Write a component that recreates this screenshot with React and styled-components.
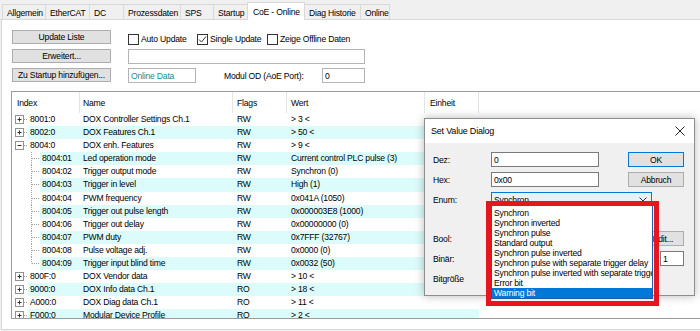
import styled, { createGlobalStyle } from "styled-components";

const GlobalStyle = createGlobalStyle`
  html, body {
    margin: 0;
    padding: 0;
    background: #f0f0f0;
  }
  body {
    font-family: "Liberation Sans", Arial, sans-serif;
    font-size: 8.6px;
    letter-spacing: -0.2px;
    color: #000;
  }
  * {
    box-sizing: border-box;
  }
`;

const Screen = styled.div`
  position: relative;
  width: 700px;
  height: 331px;
  overflow: hidden;
  background: #f0f0f0;
`;

const TabStrip = styled.div`
  display: flex;
  align-items: flex-end;
  height: 20px;
  padding-left: 2px;
  border-bottom: 1px solid #d9d9d9;
`;

const Tab = styled.div`
  width: ${(p) => p.$w}px;
  height: ${(p) => (p.$active ? 18 : 15)}px;
  margin-left: -1px;
  margin-bottom: ${(p) => (p.$active ? -1 : 0)}px;
  padding: ${(p) => (p.$active ? 4 : 3)}px 0 0 ${(p) => (p.$active ? 5 : 4)}px;
  border: 1px solid #d9d9d9;
  border-bottom: none;
  background: ${(p) => (p.$active ? "#fff" : "#f0f0f0")};
  white-space: nowrap;
  z-index: ${(p) => (p.$active ? 1 : 0)};
  &:first-child {
    margin-left: 0;
  }
`;

const Page = styled.div`
  height: 310px;
  margin-left: 1px;
  padding: 10px 0 0 9px;
  background: #fff;
  border-left: 1px solid #d9d9d9;
  border-bottom: 1px solid #d9d9d9;
`;

const Toolbar = styled.div`
  display: grid;
  grid-template-columns: 99px auto;
  grid-auto-rows: 15px;
  column-gap: 17px;
  row-gap: 4px;
  margin-left: 1px;
`;

const Button = styled.div`
  display: flex;
  align-items: center;
  justify-content: center;
  height: ${(p) => p.$h || 14}px;
  width: ${(p) => (p.$w ? p.$w + "px" : "auto")};
  justify-self: ${(p) => (p.$end ? "end" : "stretch")};
  background: #e1e1e1;
  border: 1px solid ${(p) => (p.$default ? "#0078d7" : "#adadad")};
  white-space: nowrap;
`;

const CheckRow = styled.div`
  display: grid;
  grid-template-columns: 69px 70px auto;
  align-items: center;
  padding-top: 3px;
`;

const Check = styled.label`
  display: flex;
  align-items: center;
  gap: 2px;
  white-space: nowrap;
`;

const Box = styled.span`
  display: inline-flex;
  align-items: center;
  justify-content: center;
  width: 11px;
  height: 11px;
  border: 1px solid #333;
  background: #fff;
`;

const Field = styled.div`
  display: flex;
  align-items: center;
  width: ${(p) => p.$w}px;
  height: 15px;
  padding-left: 2px;
  justify-self: ${(p) => (p.$end ? "end" : "start")};
  background: #fff;
  border: 1px solid ${(p) => (p.$light ? "#b4b4b4" : "#7a7a7a")};
  color: ${(p) => p.$color || "#000"};
  white-space: nowrap;
  overflow: hidden;
`;

const Inline = styled.div`
  display: flex;
  align-items: center;
`;

const FieldLabel = styled.span`
  width: 98px;
  margin-left: 28px;
  white-space: nowrap;
`;

const TableBox = styled.div`
  margin-top: 8px;
  width: 700px;
  height: 228px;
  border: 1px solid #9b9b9b;
  border-right: none;
  overflow: hidden;
`;

const HeaderRow = styled.div`
  display: flex;
  height: 21px;
`;

const HeadCell = styled.div`
  display: flex;
  align-items: center;
  width: ${(p) => p.$w}px;
  padding-left: ${(p) => p.$pad}px;
  border-right: 1px solid #e5e5e5;
`;

const Row = styled.div`
  display: flex;
  height: 13.1px;
  line-height: 13.1px;
`;

const Gutter = styled.svg`
  flex: none;
  display: block;
`;

const Stripe = styled.div`
  display: flex;
  background: ${(p) => (p.$odd ? "#dcfcfc" : "transparent")};
`;

const Cell = styled.div`
  width: ${(p) => p.$w}px;
  padding-left: ${(p) => p.$pad}px;
  white-space: nowrap;
  overflow: hidden;
`;

const Dialog = styled.div`
  position: absolute;
  left: 424px;
  top: 118px;
  width: 271px;
  height: 178px;
  background: #f0f0f0;
  border: 1px solid #8e8e8e;
  box-shadow: 0 0 9px rgba(0, 0, 0, 0.28);
`;

const TitleBar = styled.div`
  display: flex;
  align-items: center;
  justify-content: space-between;
  height: 24px;
  padding: 0 9px 0 6px;
  background: #fff;
  font-size: 9px;
`;

const DialogBody = styled.div`
  display: grid;
  grid-template-columns: 58px 137px 56px;
  grid-template-rows: 15px 15px 15px 14px 15px 15px 15px;
  row-gap: 5px;
  align-items: center;
  padding: 9px 0 0 8px;
`;

const Label = styled.span`
  grid-column: 1;
  white-space: nowrap;
`;

const Select = styled.div`
  grid-column: 2 / span 2;
  display: flex;
  align-items: center;
  justify-content: space-between;
  width: 161px;
  height: 15px;
  padding: 0 4px 0 2px;
  background: #e5f1fb;
  border: 1px solid #0078d7;
`;

const List = styled.div`
  position: absolute;
  left: 66px;
  top: 86px;
  width: 162px;
  height: 94px;
  padding-top: 2px;
  background: #fff;
  border: 1px solid #1e5aa8;
  overflow: hidden;
`;

const Option = styled.div`
  height: 10px;
  line-height: 10px;
  padding-left: 2px;
  white-space: nowrap;
  background: ${(p) => (p.$selected ? "#0078d7" : "transparent")};
  color: ${(p) => (p.$selected ? "#fff" : "#000")};
`;

const Marker = styled.div`
  position: absolute;
  left: 486px;
  top: 201px;
  width: 173px;
  height: 105px;
  border: 5px solid #e5161f;
`;

const tabs = [
  ["Allgemein", 44],
  ["EtherCAT", 45],
  ["DC", 35],
  ["Prozessdaten", 58],
  ["SPS", 34],
  ["Startup", 35],
  ["CoE - Online", 58],
  ["Diag Historie", 57],
  ["Online", 30],
];

const rows = [
  ["8001:0", "DOX Controller Settings Ch.1", "RW", "> 3 <", 0, "+"],
  ["8002:0", "DOX Features Ch.1", "RW", "> 50 <", 0, "+"],
  ["8004:0", "DOX enh. Features", "RW", "> 9 <", 0, "-"],
  ["8004:01", "Led operation mode", "RW", "Current control PLC pulse (3)", 1],
  ["8004:02", "Trigger output mode", "RW", "Synchron (0)", 1],
  ["8004:03", "Trigger in level", "RW", "High (1)", 1],
  ["8004:04", "PWM frequency", "RW", "0x041A (1050)", 1],
  ["8004:05", "Trigger out pulse length", "RW", "0x000003E8 (1000)", 1],
  ["8004:06", "Trigger out delay", "RW", "0x00000000 (0)", 1],
  ["8004:07", "PWM duty", "RW", "0x7FFF (32767)", 1],
  ["8004:08", "Pulse voltage adj.", "RW", "0x0000 (0)", 1],
  ["8004:09", "Trigger input blind time", "RW", "0x0032 (50)", 2],
  ["800F:0", "DOX Vendor data", "RW", "> 10 <", 0, "+"],
  ["9000:0", "DOX Info data Ch.1", "RO", "> 18 <", 0, "+"],
  ["A000:0", "DOX Diag data Ch.1", "RO", "> 11 <", 0, "+"],
  ["F000:0", "Modular Device Profile", "RO", "> 2 <", 0, "+"],
];

const enumOptions = [
  "Synchron",
  "Synchron inverted",
  "Synchron pulse",
  "Standard output",
  "Synchron pulse inverted",
  "Synchron pulse with separate trigger delay",
  "Synchron pulse inverted with separate trigger delay",
  "Error bit",
  "Warning bit",
];

function TreeLines({ level, toggle }) {
  const dots = { stroke: "#a0a0a0", strokeWidth: 1, strokeDasharray: "1 1" };
  if (level === 0) {
    return (
      <Gutter width="16" height="13.1">
        <line x1="12" y1="6.5" x2="16" y2="6.5" {...dots} />
        <rect x="3.5" y="2.5" width="8" height="8" fill="#fff" stroke="#919191" />
        <line x1="5.5" y1="6.5" x2="9.5" y2="6.5" stroke="#333" />
        {toggle === "+" && <line x1="7.5" y1="4.5" x2="7.5" y2="8.5" stroke="#333" />}
      </Gutter>
    );
  }
  return (
    <Gutter width="28" height="13.1">
      <line x1="19.5" y1="0" x2="19.5" y2={level === 2 ? 6.5 : 13.1} {...dots} />
      <line x1="20" y1="6.5" x2="28" y2="6.5" {...dots} />
    </Gutter>
  );
}

export default function App() {
  return (
    <Screen>
      <GlobalStyle />
      <TabStrip>
        {tabs.map(([t, w]) => (
          <Tab key={t} $w={w} $active={t === "CoE - Online"}>
            {t}
          </Tab>
        ))}
      </TabStrip>
      <Page>
        <Toolbar>
          <Button>Update Liste</Button>
          <CheckRow>
            <Check>
              <Box />
              Auto Update
            </Check>
            <Check>
              <Box>
                <svg width="9" height="9" viewBox="0 0 9 9">
                  <polyline points="1,4.5 3.5,7 8,1.5" fill="none" stroke="#333" strokeWidth="1" />
                </svg>
              </Box>
              Single Update
            </Check>
            <Check>
              <Box />
              Zeige Offline Daten
            </Check>
          </CheckRow>
          <Button>Erweitert...</Button>
          <Field $w={237} $light />
          <Button>Zu Startup hinzufügen...</Button>
          <Inline>
            <Field $w={68} $light $color="#178a9a">
              Online Data
            </Field>
            <FieldLabel>Modul OD (AoE Port):</FieldLabel>
            <Field $w={43} $light>
              0
            </Field>
          </Inline>
        </Toolbar>
        <TableBox>
          <HeaderRow>
            <HeadCell $w={68} $pad={5}>Index</HeadCell>
            <HeadCell $w={153} $pad={3}>Name</HeadCell>
            <HeadCell $w={54} $pad={4}>Flags</HeadCell>
            <HeadCell $w={138} $pad={4}>Wert</HeadCell>
            <HeadCell $w={54} $pad={5}>Einheit</HeadCell>
          </HeaderRow>
          {rows.map(([idx, name, flags, value, level, toggle], i) => (
            <Row key={idx}>
              <TreeLines level={level} toggle={toggle} />
              <Stripe $odd={i % 2 === 1}>
                <Cell $w={level === 0 ? 52 : 40} $pad={2}>{idx}</Cell>
                <Cell $w={153} $pad={3}>{name}</Cell>
                <Cell $w={54} $pad={4}>{flags}</Cell>
                <Cell $w={138} $pad={4}>{value}</Cell>
                <Cell $w={54} $pad={5} />
              </Stripe>
            </Row>
          ))}
        </TableBox>
      </Page>

      <Dialog>
        <TitleBar>
          <span>Set Value Dialog</span>
          <svg width="10" height="10" viewBox="0 0 10 10">
            <path d="M0.5 0.5 L9.5 9.5 M9.5 0.5 L0.5 9.5" stroke="#222" strokeWidth="1" />
          </svg>
        </TitleBar>
        <DialogBody>
          <Label>Dez:</Label>
          <Field $w={108}>0</Field>
          <Button $h={15} $default>OK</Button>
          <Label>Hex:</Label>
          <Field $w={108}>0x00</Field>
          <Button $h={15}>Abbruch</Button>
          <Label>Enum:</Label>
          <Select>
            <span>Synchron</span>
            <svg width="8" height="5" viewBox="0 0 8 5">
              <polyline points="0.5,0.5 4,4 7.5,0.5" fill="none" stroke="#333" />
            </svg>
          </Select>
          <span />
          <span />
          <span />
          <Label>Bool:</Label>
          <Field $w={108} />
          <Button $h={15} $w={42} $end>Edit...</Button>
          <Label>Binär:</Label>
          <Field $w={130} />
          <Field $w={24} $end>1</Field>
          <Label>Bitgröße</Label>
        </DialogBody>
        <List>
          {enumOptions.map((o) => (
            <Option key={o} $selected={o === "Warning bit"}>
              {o}
            </Option>
          ))}
        </List>
      </Dialog>
      <Marker />
    </Screen>
  );
}
